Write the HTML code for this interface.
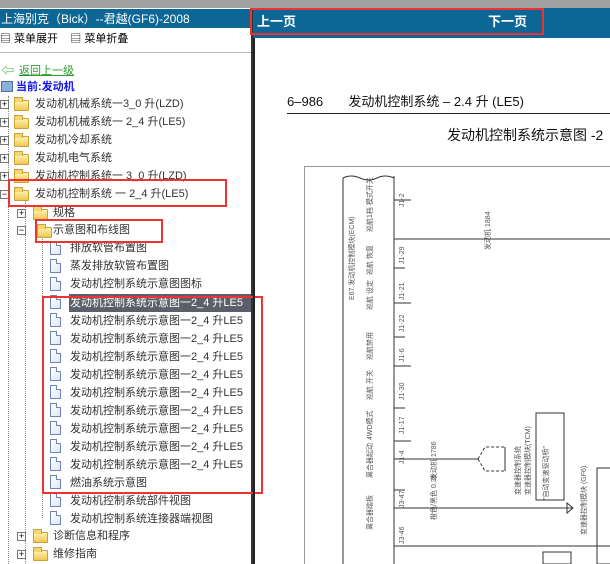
<!DOCTYPE html>
<html><head><meta charset="utf-8"><style>
*{margin:0;padding:0;box-sizing:border-box}
body{width:610px;height:564px;overflow:hidden;background:#fff;position:relative;font-family:"Liberation Sans","Noto Sans CJK SC",sans-serif;}
.a{position:absolute}
.t{position:absolute;font-size:11px;color:#333;white-space:nowrap;line-height:14px}
.pl{position:absolute;width:9px;height:9px;border:1px solid #777;background:#fff;font-size:9px;line-height:7px;text-align:center;color:#000}
.fd{position:absolute;width:15px;height:11px;background:linear-gradient(#fff3b0,#f0c850);border:1px solid #c9a23a;border-radius:1px}
.fd:before{content:"";position:absolute;left:-1px;top:-4px;width:7px;height:4px;background:#f4d774;border:1px solid #c9a23a;border-bottom:none}
.dc{position:absolute;width:11px;height:14px;background:linear-gradient(135deg,#fff,#dfe6f6);border:1px solid #6d86b8}
.dc:after{content:"";position:absolute;right:-1px;top:-1px;width:4px;height:4px;background:#fff;border-left:1px solid #6d86b8;border-bottom:1px solid #6d86b8}
.rb{position:absolute;border:2px solid #ee3333}
.vl{position:absolute;border-left:1px dotted #888}
</style></head><body>
<div class="a" style="left:0;top:0;width:610px;height:8px;background:#a0a0a0"></div>
<div class="a" style="left:0;top:0;width:251px;height:564px;overflow:hidden">
<div class="a" style="left:0;top:9px;width:251px;height:19px;background:#0c6797"></div>
<div class="t" style="left:1px;top:11px;color:#fff;font-size:12px;line-height:16px">上海别克（Bick）--君越(GF6)-2008</div>
<div class="t" style="left:0;top:32px;color:#000">▤ 菜单展开&nbsp;&nbsp;&nbsp;&nbsp;▤ 菜单折叠</div>
<div class="a" style="left:0;top:52px;width:251px;height:1px;background:#bbb"></div>
<div class="t" style="left:1px;top:64px;color:#3a3;font-size:13px">⇦</div>
<div class="t" style="left:19px;top:64px;color:#2a9a2a;text-decoration:underline;font-size:11px">返回上一级</div>
<div class="a" style="left:1px;top:81px;width:12px;height:11px;background:#8ab0d8;border:1px solid #4a6fa0"></div>
<div class="t" style="left:16px;top:80px;color:#1515e0;font-weight:bold">当前:发动机</div>
<div class="vl" style="left:8px;top:96px;height:468px"></div>
<div class="vl" style="left:25px;top:200px;height:364px"></div>
<div class="vl" style="left:42px;top:236px;height:282px"></div>

<div class="pl" style="left:0;top:100px">+</div><div class="fd" style="left:14px;top:100px"></div><div class="t" style="left:35px;top:97px">发动机机械系统一3_0 升(LZD)</div>
<div class="pl" style="left:0;top:118px">+</div><div class="fd" style="left:14px;top:118px"></div><div class="t" style="left:35px;top:115px">发动机机械系统一 2_4 升(LE5)</div>
<div class="pl" style="left:0;top:136px">+</div><div class="fd" style="left:14px;top:136px"></div><div class="t" style="left:35px;top:133px">发动机冷却系统</div>
<div class="pl" style="left:0;top:154px">+</div><div class="fd" style="left:14px;top:154px"></div><div class="t" style="left:35px;top:151px">发动机电气系统</div>
<div class="pl" style="left:0;top:172px">+</div><div class="fd" style="left:14px;top:172px"></div><div class="t" style="left:35px;top:169px">发动机控制系统一 3_0 升(LZD)</div>
<div class="pl" style="left:0;top:190px">−</div><div class="fd" style="left:14px;top:190px"></div><div class="t" style="left:35px;top:187px">发动机控制系统 一 2_4 升(LE5)</div>
<div class="pl" style="left:17px;top:209px">+</div><div class="fd" style="left:33px;top:209px"></div><div class="t" style="left:53px;top:206px">规格</div>
<div class="pl" style="left:17px;top:226px">−</div><div class="fd" style="left:37px;top:227px"></div><div class="t" style="left:53px;top:223px">示意图和布线图</div>

<div class="dc" style="left:50px;top:241px"></div><div class="t" style="left:70px;top:241px">排放软管布置图</div>
<div class="dc" style="left:50px;top:259px"></div><div class="t" style="left:70px;top:259px">蒸发排放软管布置图</div>
<div class="dc" style="left:50px;top:277px"></div><div class="t" style="left:70px;top:277px">发动机控制系统示意图图标</div>
<div class="a" style="left:69px;top:294px;width:182px;height:18px;background:#5a5f6a"></div>
<div class="dc" style="left:50px;top:295px"></div><div class="t" style="left:70px;top:296px;color:#fff">发动机控制系统示意图一2_4 升LE5</div>
<div class="dc" style="left:50px;top:313px"></div><div class="t" style="left:70px;top:314px">发动机控制系统示意图一2_4 升LE5</div>
<div class="dc" style="left:50px;top:331px"></div><div class="t" style="left:70px;top:332px">发动机控制系统示意图一2_4 升LE5</div>
<div class="dc" style="left:50px;top:349px"></div><div class="t" style="left:70px;top:350px">发动机控制系统示意图一2_4 升LE5</div>
<div class="dc" style="left:50px;top:367px"></div><div class="t" style="left:70px;top:368px">发动机控制系统示意图一2_4 升LE5</div>
<div class="dc" style="left:50px;top:385px"></div><div class="t" style="left:70px;top:386px">发动机控制系统示意图一2_4 升LE5</div>
<div class="dc" style="left:50px;top:403px"></div><div class="t" style="left:70px;top:404px">发动机控制系统示意图一2_4 升LE5</div>
<div class="dc" style="left:50px;top:421px"></div><div class="t" style="left:70px;top:422px">发动机控制系统示意图一2_4 升LE5</div>
<div class="dc" style="left:50px;top:439px"></div><div class="t" style="left:70px;top:440px">发动机控制系统示意图一2_4 升LE5</div>
<div class="dc" style="left:50px;top:457px"></div><div class="t" style="left:70px;top:458px">发动机控制系统示意图一2_4 升LE5</div>
<div class="dc" style="left:50px;top:475px"></div><div class="t" style="left:70px;top:476px">燃油系统示意图</div>
<div class="dc" style="left:50px;top:493px"></div><div class="t" style="left:70px;top:494px">发动机控制系统部件视图</div>
<div class="dc" style="left:50px;top:511px"></div><div class="t" style="left:70px;top:512px">发动机控制系统连接器端视图</div>
<div class="pl" style="left:17px;top:532px">+</div><div class="fd" style="left:33px;top:532px"></div><div class="t" style="left:53px;top:529px">诊断信息和程序</div>
<div class="pl" style="left:17px;top:550px">+</div><div class="fd" style="left:33px;top:550px"></div><div class="t" style="left:53px;top:547px">维修指南</div>
</div>
<div class="a" style="left:251px;top:8px;width:2px;height:556px;background:#333"></div>

<div class="rb" style="left:8px;top:179px;width:219px;height:28px"></div>
<div class="rb" style="left:35px;top:219px;width:128px;height:24px"></div>
<div class="rb" style="left:42px;top:296px;width:221px;height:198px"></div>

<!-- right panel -->
<div class="a" style="left:253px;top:8px;width:357px;height:30px;background:#0c6797"></div>
<div class="a" style="left:253px;top:38px;width:2px;height:526px;background:#222"></div>
<div class="t" style="left:257px;top:14px;color:#fff;font-weight:bold;font-size:13px;line-height:16px">上一页</div>
<div class="t" style="left:488px;top:14px;color:#fff;font-weight:bold;font-size:13px;line-height:16px">下一页</div>
<div class="rb" style="left:250px;top:8px;width:294px;height:27px"></div>

<div class="t" style="left:287px;top:95px;font-size:13px;color:#111">6–986&nbsp;&nbsp;&nbsp;&nbsp;&nbsp;&nbsp;&nbsp;发动机控制系统 – 2.4 升 (LE5)</div>
<div class="a" style="left:287px;top:113px;width:323px;height:1px;background:#222"></div>
<div class="t" style="left:447px;top:127px;font-size:14px;color:#111;line-height:17px">发动机控制系统示意图 -2</div>
<div class="a" style="left:304px;top:166px;width:306px;height:1px;background:#999"></div>
<div class="a" style="left:304px;top:166px;width:1px;height:398px;background:#999"></div>

<svg class="a" style="left:0;top:0" width="610" height="564" font-family="Liberation Sans,Noto Sans CJK SC,sans-serif" font-size="7" fill="#444">
<g stroke="#333" stroke-width="1" fill="none">
<path d="M343 564V178q8-4 17 0t17 0t17 0"/>
<path d="M394 176V564"/>
<path d="M394 239H610M394 459H478M394 508H572M394 546H610"/>
<path d="M394 200H411M394 268H405M394 303H411M394 337H405M394 366H411M394 408H405M394 441H411M394 490H405"/>
<path d="M478 459l7-12h20M478 459l7 12h20" stroke-dasharray="3 2"/>
<path d="M505 447v24"/>
<path d="M567 503l6 5l-6 5z"/>
<rect x="536" y="413" width="28" height="87"/>
<rect x="597" y="468" width="14" height="96"/>
<rect x="543" y="552" width="28" height="12"/>
</g>
<g fill="#555">
<text transform="rotate(-90 404 207)" x="404" y="207">J1-2</text>
<text transform="rotate(-90 404 264)" x="404" y="264">J1-29</text>
<text transform="rotate(-90 404 300)" x="404" y="300">J1-21</text>
<text transform="rotate(-90 404 332)" x="404" y="332">J1-22</text>
<text transform="rotate(-90 404 362)" x="404" y="362">J1-6</text>
<text transform="rotate(-90 404 400)" x="404" y="400">J1-30</text>
<text transform="rotate(-90 404 434)" x="404" y="434">J1-17</text>
<text transform="rotate(-90 404 464)" x="404" y="464">J1-4</text>
<text transform="rotate(-90 404 508)" x="404" y="508">J3-47</text>
<text transform="rotate(-90 404 544)" x="404" y="544">J3-46</text>
<text transform="rotate(-90 354 300)" x="354" y="300">E67 发动机控制模块(ECM)</text>
<text transform="rotate(-90 372 232)" x="372" y="232">巡航1档 模式开关</text>
<text transform="rotate(-90 372 275)" x="372" y="275">巡航 恢复</text>
<text transform="rotate(-90 372 310)" x="372" y="310">巡航 设定</text>
<text transform="rotate(-90 372 360)" x="372" y="360">巡航禁用</text>
<text transform="rotate(-90 372 400)" x="372" y="400">巡航 开关</text>
<text transform="rotate(-90 372 440)" x="372" y="440">4WD模式</text>
<text transform="rotate(-90 372 478)" x="372" y="478">离合器起动</text>
<text transform="rotate(-90 372 530)" x="372" y="530">离合器踏板</text>
<text transform="rotate(-90 490 250)" x="490" y="250">发动机 1884</text>
<text transform="rotate(-90 436 480)" x="436" y="480">发动机 1786</text>
<text transform="rotate(-90 436 520)" x="436" y="520">橙色/黑色 0.35</text>
<text transform="rotate(-90 520 495)" x="520" y="495">变速器控制系统</text>
<text transform="rotate(-90 530 495)" x="530" y="495">变速器控制模块(TCM)</text>
<text transform="rotate(-90 548 500)" x="548" y="500">"自动变速驱动桥"</text>
<text transform="rotate(-90 586 535)" x="586" y="535">变速器控制模块 (GF6)</text>
</g>
</svg>
</body></html>
